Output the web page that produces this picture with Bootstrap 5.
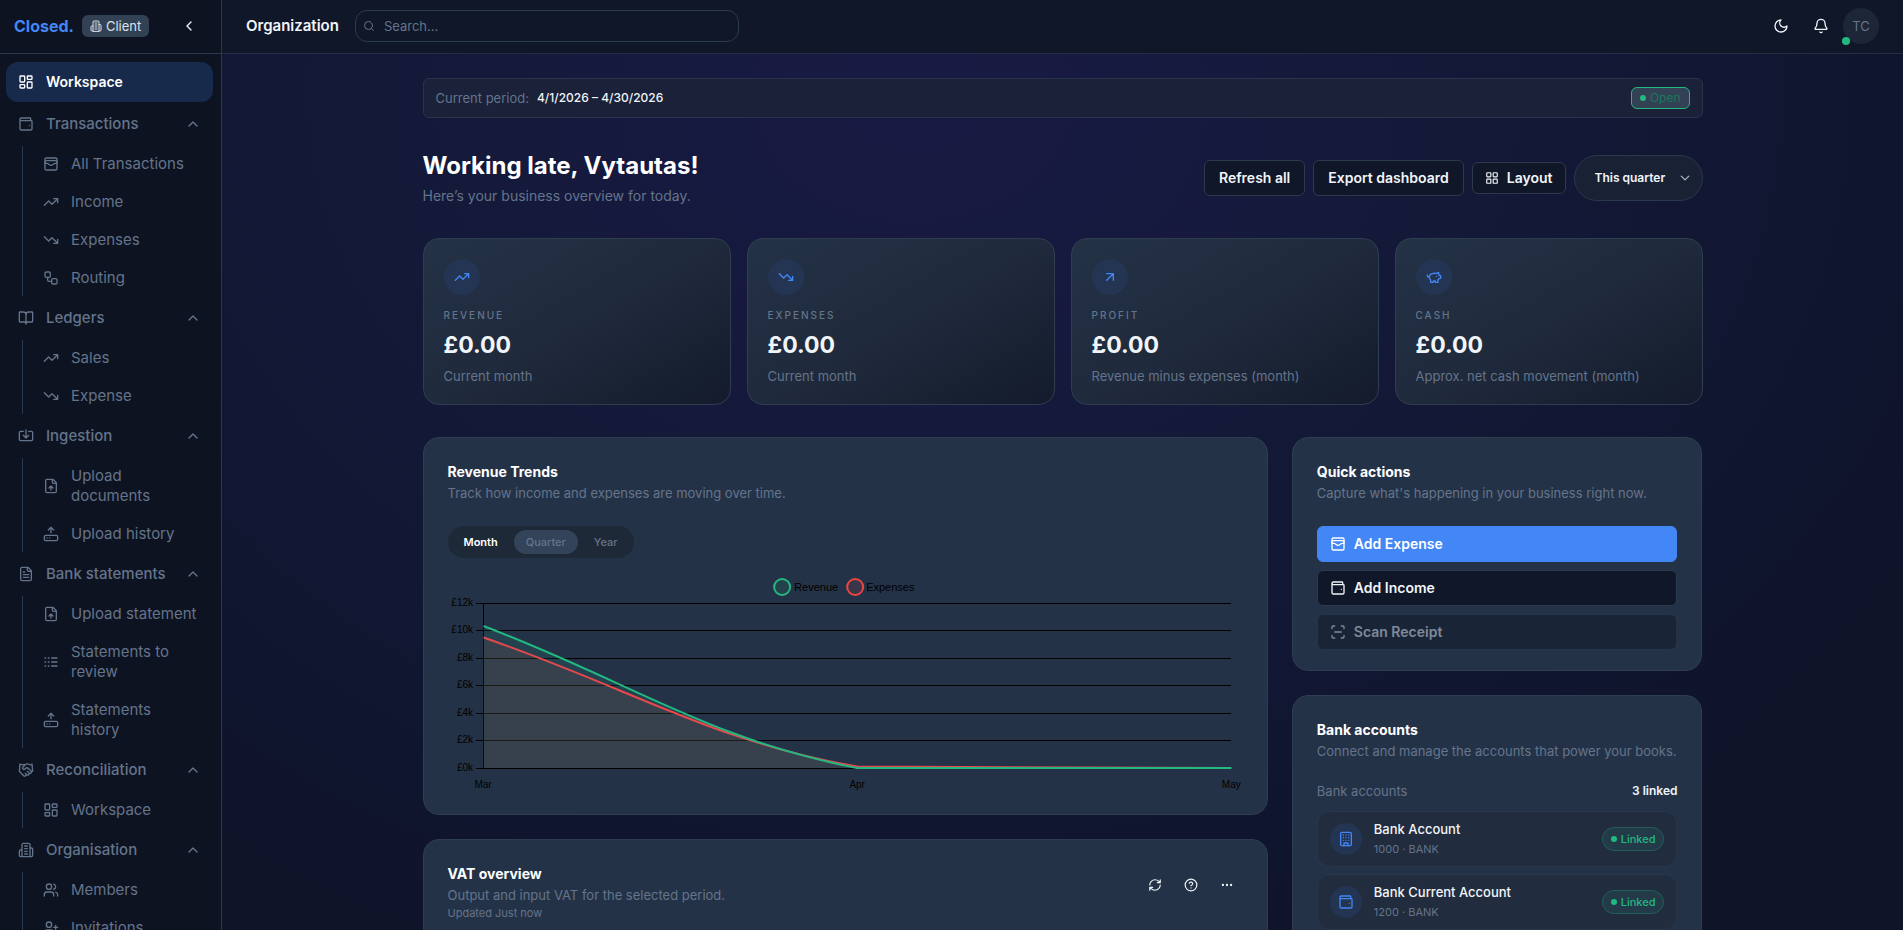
<!DOCTYPE html>
<html lang="en" data-bs-theme="dark">
<head>
<meta charset="utf-8">
<meta name="viewport" content="width=device-width, initial-scale=1">
<title>Closed. – Workspace</title>
<link rel="stylesheet" href="https://cdn.jsdelivr.net/npm/bootstrap@5.3.0/dist/css/bootstrap.min.css">
<style>
:root{--muted:#64748b;--line:#2f3d50;--panel:#243247;--ink:#f1f5f9;--blue:#4287f5;--green:#22b881}
body{font-family:Inter,"Liberation Sans",sans-serif;font-size:14px;line-height:20px;color:var(--ink);
  background:radial-gradient(ellipse 64% 105% at 48% 10%,#191a44 0%,#141939 42%,#10152f 80%,#0f1428 100%)}
a{text-decoration:none;color:inherit}
.ico{width:16px;height:16px;flex:none;fill:none;stroke:currentColor;stroke-width:2;stroke-linecap:round;stroke-linejoin:round}
.ico-sm{width:12px;height:12px}
.ico-md{width:14px;height:14px}
.muted{color:var(--muted)}
.fs-13{font-size:13px}.fs-12{font-size:12px}.fs-11{font-size:11px}
/* sidebar */
.side{width:222px;background:#0d1321;border-right:1px solid #2b3950}
.bar{height:54px;padding:0 14px 2px;border-bottom:1px solid #2b3950}
.top-bar{background:#101729;border-color:#252e47;padding:0 24px 2px}
.brand{font-size:16px;font-weight:700;color:var(--blue)}
.client{height:22px;padding:0 8px;border-radius:6px;background:#334155;color:#dbe2ea;font-size:13px}
.side-nav{padding:8px 8px 8px 6px;gap:2px}
.nav-row{height:40px;padding:0 12px;border:0;border-radius:12px;background:none;color:var(--muted);font-size:15px;font-weight:500;gap:12px;width:100%;text-align:left}
.nav-row.on{background:#172a4c;color:#fff;font-size:14px;font-weight:600}
.sub-list{margin-left:16px;border-left:1px solid #2b3950;gap:2px}
.sub-list a{display:flex;align-items:center;gap:12px;padding:8px 0 8px 20px;color:var(--muted);font-size:15px}
/* header */
.org-name{font-size:15px}
.find{position:relative;width:384px}
.find input{height:32px;border:1px solid #2b3b4e;border-radius:12px;background:#101728;font-size:13px;padding:0 12px 0 28px;color:var(--ink)}
.find input::placeholder{color:var(--muted);opacity:1}
.find .ico{position:absolute;left:8px;top:10px;color:var(--muted)}
.icon-btn{width:36px;height:36px;border:0;background:none;color:var(--ink);display:grid;place-items:center;padding:0}
.avatar{position:relative;width:36px;height:36px;border-radius:50%;background:#1d2637;color:var(--muted);font-size:13px}
.avatar::after{content:"";position:absolute;left:-1px;bottom:-1px;width:8px;height:8px;border-radius:50%;background:var(--green)}
/* content */
.page-area{min-height:0;overflow:auto;scrollbar-width:none}
.wrap{max-width:1280px;margin:0 auto;padding:24px 0}
.period{height:40px;padding:0 12px;border:1px solid #29344a;border-radius:6px;background:#1a2138}
.dot{width:6px;height:6px;border-radius:50%;background:var(--green);flex:none}
.open-tag{height:22px;padding:0 8px;border:1px solid var(--green);border-radius:6px;background:#334155;color:#177a5b;font-size:12px;gap:4px}
h1{font-size:24px;line-height:32px;font-weight:700;margin:0}
.tool{height:36px;padding:0 14px;border:1px solid #2b3a4d;border-radius:6px;background:#101728;color:var(--ink);font-size:14px;font-weight:600;gap:8px;display:inline-flex;align-items:center}
.tool-s{height:32px;padding:0 12px}
.range{width:129px;height:46px;border:1px solid #29374b;border-radius:23px;background-color:#192235;color:var(--ink);font-size:12px;font-weight:600;padding:0 28px 0 20px;background-position:right 12px center;background-size:10px;
 --bs-form-select-bg-img:url("data:image/svg+xml,%3csvg xmlns='http://www.w3.org/2000/svg' viewBox='0 0 10 10'%3e%3cpath d='M1 3l4 4 4-4' fill='none' stroke='%23f1f5f9' stroke-width='2'/%3e%3c/svg%3e")}
.kpi{height:167px;padding:20px;border:1px solid var(--line);border-radius:16px;background:linear-gradient(150deg,#243246 0%,#1f2a3c 50%,#131b2c 100%)}
.disc{width:36px;height:36px;border-radius:50%;background:#243553;color:var(--blue);display:grid;place-items:center;flex:none}
.kpi-name{font-size:10px;line-height:16px;font-weight:500;letter-spacing:2px;color:var(--muted);margin-top:12px}
.kpi-sum{font-size:23px;line-height:32px;font-weight:700;margin-top:6px}
.kpi-note{line-height:20px;margin-top:5px}
.panel{border:1px solid var(--line);border-radius:16px;background:var(--panel);padding:23px 24px 20px}
.panel h2{font-size:14px;line-height:22px;font-weight:700;margin:0}
.panel-note{font-size:13px;line-height:20px;margin:0;white-space:nowrap}
.updated{line-height:16px}
.seg{background:#1e2938;border-radius:16px;padding:4px;margin-top:23px}
.seg button{border:0;background:none;height:24px;border-radius:12px;padding:0 12px;font-size:11px;font-weight:500;color:var(--muted)}
.seg button.lit{color:#fff;font-weight:600}
.seg button.cur{background:#334359}
.vat-tools{margin-right:-2px}
.quick-list{margin-top:23px}
.quick .tool{width:100%;padding:0 12px}
.quick .go{background:var(--blue);border-color:var(--blue);color:#fff}
.quick .tool:disabled{background:#1a2437;border-color:#273448;color:#7f8a99}
.acct-head{margin:20px 0 10px}
.acct{height:56px;padding:0 12px;border:1px solid #2a374a;border-radius:12px;background:#212c3e}
.acct+.acct{margin-top:7px}
.acct .disc{width:32px;height:32px}
.linked{height:24px;padding:0 8px;border:1px solid #215f58;border-radius:12px;background:#233b49;color:var(--green);font-size:11px;font-weight:500;gap:4px}
.chart text{font-family:"Liberation Sans",sans-serif;font-size:10px;fill:#000}
.chart .key{font-size:11px}
</style>
</head>
<body>
<svg class="d-none" aria-hidden="true">
<symbol id="dash" viewBox="0 0 24 24"><rect x="3" y="3" width="7" height="9" rx="1"/><rect x="14" y="3" width="7" height="5" rx="1"/><rect x="14" y="12" width="7" height="9" rx="1"/><rect x="3" y="16" width="7" height="5" rx="1"/></symbol>
<symbol id="wallet" viewBox="0 0 24 24"><path d="M19 7V4a1 1 0 0 0-1-1H5a2 2 0 0 0 0 4h15a1 1 0 0 1 1 1v11a2 2 0 0 1-2 2H5a2 2 0 0 1-2-2V5M17 14h.01"/></symbol>
<symbol id="cards" viewBox="0 0 24 24"><rect x="3" y="3" width="18" height="18" rx="2"/><path d="M3 9a2 2 0 0 1 2-2h14a2 2 0 0 1 2 2M3 11h3c.8 0 1.6.3 2.1.9l1.1.9c1.6 1.6 4.1 1.6 5.7 0l1.1-.9c.5-.5 1.3-.9 2.1-.9H21"/></symbol>
<symbol id="up" viewBox="0 0 24 24"><path d="M22 7l-8.500 8.500-5-5L2 17M16 7h6v6"/></symbol>
<symbol id="down" viewBox="0 0 24 24"><path d="M22 17l-8.500-8.500-5 5L2 7M16 17h6v-6"/></symbol>
<symbol id="flow" viewBox="0 0 24 24"><rect x="3" y="3" width="8" height="8" rx="2"/><path d="M7 11v4a2 2 0 0 0 2 2h4"/><rect x="13" y="13" width="8" height="8" rx="2"/></symbol>
<symbol id="book" viewBox="0 0 24 24"><path d="M12 7v14M3 18a1 1 0 0 1-1-1V4a1 1 0 0 1 1-1h5a4 4 0 0 1 4 4 4 4 0 0 1 4-4h5a1 1 0 0 1 1 1v13a1 1 0 0 1-1 1h-6a3 3 0 0 0-3 3 3 3 0 0 0-3-3z"/></symbol>
<symbol id="import" viewBox="0 0 24 24"><path d="M12 3v12M8 11l4 4 4-4M8 5H4a2 2 0 0 0-2 2v10a2 2 0 0 0 2 2h16a2 2 0 0 0 2-2V7a2 2 0 0 0-2-2h-4"/></symbol>
<symbol id="fileup" viewBox="0 0 24 24"><path d="M15 2H6a2 2 0 0 0-2 2v16a2 2 0 0 0 2 2h12a2 2 0 0 0 2-2V7zM14 2v4a2 2 0 0 0 2 2h4M12 12v6M15 15l-3-3-3 3"/></symbol>
<symbol id="drive" viewBox="0 0 24 24"><path d="M16 6l-4-4-4 4M12 2v8M6 18h.01M10 18h.01"/><rect x="2" y="14" width="20" height="8" rx="2"/></symbol>
<symbol id="file" viewBox="0 0 24 24"><path d="M15 2H6a2 2 0 0 0-2 2v16a2 2 0 0 0 2 2h12a2 2 0 0 0 2-2V7zM14 2v4a2 2 0 0 0 2 2h4M10 9H8M16 13H8M16 17H8"/></symbol>
<symbol id="logs" viewBox="0 0 24 24"><path d="M13 12h8M13 18h8M13 6h8M3 12h1M3 18h1M3 6h1M8 12h1M8 18h1M8 6h1"/></symbol>
<symbol id="shake" viewBox="0 0 24 24"><path d="M11 17l2 2a1 1 0 1 0 3-3M14 14l2.500 2.500a1 1 0 1 0 3-3l-3.880-3.880a3 3 0 0 0-4.240 0l-.88.88a1 1 0 1 1-3-3l2.810-2.810a5.790 5.790 0 0 1 7.060-.87l.47.28a2 2 0 0 0 1.420.25L21 4M21 3l1 11h-2M3 3L2 14l6.500 6.500a1 1 0 1 0 3-3M3 4h8"/></symbol>
<symbol id="org" viewBox="0 0 24 24"><path d="M6 22V4a2 2 0 0 1 2-2h8a2 2 0 0 1 2 2v18zM6 12H4a2 2 0 0 0-2 2v6a2 2 0 0 0 2 2h2M18 9h2a2 2 0 0 1 2 2v9a2 2 0 0 1-2 2h-2M10 6h4M10 10h4M10 14h4M10 18h4"/></symbol>
<symbol id="users" viewBox="0 0 24 24"><path d="M16 21v-2a4 4 0 0 0-4-4H6a4 4 0 0 0-4 4v2M22 21v-2a4 4 0 0 0-3-3.870M16 3.130a4 4 0 0 1 0 7.750"/><circle cx="9" cy="7" r="4"/></symbol>
<symbol id="useradd" viewBox="0 0 24 24"><path d="M16 21v-2a4 4 0 0 0-4-4H6a4 4 0 0 0-4 4v2M19 8v6M22 11h-6"/><circle cx="9" cy="7" r="4"/></symbol>
<symbol id="chev" viewBox="0 0 24 24"><path d="M18 15l-6-6-6 6"/></symbol>
<symbol id="left" viewBox="0 0 24 24"><path d="M15 18l-6-6 6-6"/></symbol>
<symbol id="search" viewBox="0 0 24 24"><circle cx="11" cy="11" r="8"/><path d="M21 21l-4.300-4.300"/></symbol>
<symbol id="moon" viewBox="0 0 24 24"><path d="M12 3a6 6 0 0 0 9 9 9 9 0 1 1-9-9z"/></symbol>
<symbol id="bell" viewBox="0 0 24 24"><path d="M10.270 21a2 2 0 0 0 3.460 0M3.260 15.330A1 1 0 0 0 4 17h16a1 1 0 0 0 .74-1.670C19.410 13.960 18 12.500 18 8A6 6 0 0 0 6 8c0 4.500-1.410 5.960-2.740 7.330z"/></symbol>
<symbol id="grid" viewBox="0 0 24 24"><rect x="3" y="3" width="7" height="7" rx="1"/><rect x="14" y="3" width="7" height="7" rx="1"/><rect x="14" y="14" width="7" height="7" rx="1"/><rect x="3" y="14" width="7" height="7" rx="1"/></symbol>
<symbol id="ne" viewBox="0 0 24 24"><path d="M7 7h10v10M7 17L17 7"/></symbol>
<symbol id="pig" viewBox="0 0 24 24"><path d="M19 5c-1.500 0-2.800 1.400-3 2-3.500-1.500-11-.3-11 5 0 1.800 0 3 2 4.500V20h4v-2h3v2h4v-4c1-.5 1.700-1 2-2h2v-4h-2c0-1-.5-1.500-1-2zM2 9v1c0 1.100.9 2 2 2h1M16 11h.01"/></symbol>
<symbol id="scan" viewBox="0 0 24 24"><path d="M3 7V5a2 2 0 0 1 2-2h2M17 3h2a2 2 0 0 1 2 2v2M21 17v2a2 2 0 0 1-2 2h-2M7 21H5a2 2 0 0 1-2-2v-2M7 12h10"/></symbol>
<symbol id="bldg" viewBox="0 0 24 24"><rect x="4" y="2" width="16" height="20" rx="2"/><path d="M9 22v-4h6v4M8 6h.01M16 6h.01M12 6h.01M12 10h.01M12 14h.01M16 10h.01M16 14h.01M8 10h.01M8 14h.01"/></symbol>
<symbol id="sync" viewBox="0 0 24 24"><path d="M3 12a9 9 0 0 1 9-9 9.750 9.750 0 0 1 6.740 2.740L21 8M21 3v5h-5M21 12a9 9 0 0 1-9 9 9.750 9.750 0 0 1-6.740-2.740L3 16M8 16H3v5"/></symbol>
<symbol id="help" viewBox="0 0 24 24"><circle cx="12" cy="12" r="10"/><path d="M9.090 9a3 3 0 0 1 5.830 1c0 2-3 3-3 3M12 17h.01"/></symbol>
<symbol id="more" viewBox="0 0 24 24"><path d="M5 12h.01M12 12h.01M19 12h.01" stroke-width="4"/></symbol>
</svg>

<div class="d-flex vh-100 overflow-hidden">
  <aside class="side d-flex flex-column flex-shrink-0">
    <div class="bar d-flex align-items-center flex-shrink-0">
      <a href="#" class="brand me-2">Closed.</a>
      <span class="client d-inline-flex align-items-center gap-1"><svg class="ico ico-sm"><use href="#org"/></svg>Client</span>
      <button class="icon-btn ms-auto" aria-label="Collapse sidebar"><svg class="ico"><use href="#left"/></svg></button>
    </div>
    <nav class="side-nav d-flex flex-column" aria-label="Main">
      <a href="#" class="nav-row on d-flex align-items-center flex-shrink-0"><svg class="ico"><use href="#dash"/></svg>Workspace</a>
      <button class="nav-row d-flex align-items-center flex-shrink-0"><svg class="ico"><use href="#wallet"/></svg>Transactions<svg class="ico ms-auto"><use href="#chev"/></svg></button>
      <div class="sub-list d-flex flex-column">
        <a href="#"><svg class="ico"><use href="#cards"/></svg>All Transactions</a>
        <a href="#"><svg class="ico"><use href="#up"/></svg>Income</a>
        <a href="#"><svg class="ico"><use href="#down"/></svg>Expenses</a>
        <a href="#"><svg class="ico"><use href="#flow"/></svg>Routing</a>
      </div>
      <button class="nav-row d-flex align-items-center flex-shrink-0"><svg class="ico"><use href="#book"/></svg>Ledgers<svg class="ico ms-auto"><use href="#chev"/></svg></button>
      <div class="sub-list d-flex flex-column">
        <a href="#"><svg class="ico"><use href="#up"/></svg>Sales</a>
        <a href="#"><svg class="ico"><use href="#down"/></svg>Expense</a>
      </div>
      <button class="nav-row d-flex align-items-center flex-shrink-0"><svg class="ico"><use href="#import"/></svg>Ingestion<svg class="ico ms-auto"><use href="#chev"/></svg></button>
      <div class="sub-list d-flex flex-column">
        <a href="#"><svg class="ico"><use href="#fileup"/></svg><span>Upload<br>documents</span></a>
        <a href="#"><svg class="ico"><use href="#drive"/></svg>Upload history</a>
      </div>
      <button class="nav-row d-flex align-items-center flex-shrink-0"><svg class="ico"><use href="#file"/></svg>Bank statements<svg class="ico ms-auto"><use href="#chev"/></svg></button>
      <div class="sub-list d-flex flex-column">
        <a href="#"><svg class="ico"><use href="#fileup"/></svg>Upload statement</a>
        <a href="#"><svg class="ico"><use href="#logs"/></svg><span>Statements to<br>review</span></a>
        <a href="#"><svg class="ico"><use href="#drive"/></svg><span>Statements<br>history</span></a>
      </div>
      <button class="nav-row d-flex align-items-center flex-shrink-0"><svg class="ico"><use href="#shake"/></svg>Reconciliation<svg class="ico ms-auto"><use href="#chev"/></svg></button>
      <div class="sub-list d-flex flex-column">
        <a href="#"><svg class="ico"><use href="#dash"/></svg>Workspace</a>
      </div>
      <button class="nav-row d-flex align-items-center flex-shrink-0"><svg class="ico"><use href="#org"/></svg>Organisation<svg class="ico ms-auto"><use href="#chev"/></svg></button>
      <div class="sub-list d-flex flex-column">
        <a href="#"><svg class="ico"><use href="#users"/></svg>Members</a>
        <a href="#"><svg class="ico"><use href="#useradd"/></svg>Invitations</a>
      </div>
    </nav>
  </aside>

  <div class="d-flex flex-column flex-grow-1">
    <header class="bar top-bar d-flex align-items-center flex-shrink-0">
      <span class="org-name fw-semibold me-3">Organization</span>
      <div class="find"><svg class="ico ico-sm"><use href="#search"/></svg><input type="search" class="form-control" placeholder="Search…" aria-label="Search"></div>
      <div class="d-flex align-items-center gap-1 ms-auto">
        <button class="icon-btn" aria-label="Dark mode"><svg class="ico"><use href="#moon"/></svg></button>
        <button class="icon-btn" aria-label="Notifications"><svg class="ico"><use href="#bell"/></svg></button>
        <button class="avatar border-0 p-0">TC</button>
      </div>
    </header>
    <main class="page-area flex-grow-1">
      <div class="wrap">
        <div class="period d-flex align-items-center fs-12">
          <span class="muted me-2 fs-13">Current period:</span><span class="fw-medium">4/1/2026 – 4/30/2026</span>
          <span class="open-tag d-inline-flex align-items-center ms-auto"><i class="dot"></i>Open</span>
        </div>
        <div class="d-flex align-items-center justify-content-between my-4 py-2">
          <div>
            <h1>Working late, Vytautas!</h1>
            <div class="muted mt-1">Here’s your business overview for today.</div>
          </div>
          <div class="d-flex align-items-center gap-2">
            <button class="tool">Refresh all</button>
            <button class="tool">Export dashboard</button>
            <button class="tool tool-s"><svg class="ico ico-md"><use href="#grid"/></svg>Layout</button>
            <select class="form-select range" aria-label="Period"><option>This quarter</option><option>This month</option></select>
          </div>
        </div>
        <div class="row g-3">
          <div class="col-3"><section class="kpi"><div class="disc"><svg class="ico"><use href="#up"/></svg></div><div class="kpi-name">REVENUE</div><div class="kpi-sum">£0.00</div><div class="kpi-note muted fs-13">Current month</div></section></div>
          <div class="col-3"><section class="kpi"><div class="disc"><svg class="ico"><use href="#down"/></svg></div><div class="kpi-name">EXPENSES</div><div class="kpi-sum">£0.00</div><div class="kpi-note muted fs-13">Current month</div></section></div>
          <div class="col-3"><section class="kpi"><div class="disc"><svg class="ico"><use href="#ne"/></svg></div><div class="kpi-name">PROFIT</div><div class="kpi-sum">£0.00</div><div class="kpi-note muted fs-13">Revenue minus expenses (month)</div></section></div>
          <div class="col-3"><section class="kpi"><div class="disc"><svg class="ico"><use href="#pig"/></svg></div><div class="kpi-name">CASH</div><div class="kpi-sum">£0.00</div><div class="kpi-note muted fs-13">Approx. net cash movement (month)</div></section></div>
        </div>
        <div class="row gx-4 pt-2 mt-4">
          <div class="col-8 d-flex flex-column gap-4">
            <section class="panel">
              <h2>Revenue Trends</h2>
              <p class="panel-note muted">Track how income and expenses are moving over time.</p>
              <div class="seg d-inline-flex gap-1"><button class="lit">Month</button><button class="cur">Quarter</button><button>Year</button></div>
              <svg class="chart d-block w-100 mt-3" viewBox="0 0 795 220" role="img" aria-label="Revenue and expenses, March to May">
                <g stroke="#000" shape-rendering="crispEdges"><path d="M28 29.500H783M28 56.500H783M28 84.500H783M28 111.500H783M28 139.500H783M28 166.500H783M28 194.500H783M35.500 29V194"/></g>
                <path d="M35.500 52C185 109 260 165 409 194H783V194H35.500Z" fill="#22b881" fill-opacity=".12"/>
                <path d="M35.500 63.500C185 115 260 166 409 192.500L783 194H35.500Z" fill="#ef4444" fill-opacity=".1"/>
                <path d="M35.500 63.500C185 115 260 166 409 192.500L783 194" fill="none" stroke="#e5484d" stroke-width="2"/>
                <path d="M35.500 52C185 109 260 165 409 194H783" fill="none" stroke="#22b881" stroke-width="2"/>
                <g stroke-width="2"><circle cx="334" cy="13" r="8" fill="#24424c" stroke="#22b881"/><circle cx="407" cy="13" r="8" fill="#383648" stroke="#ef4444"/></g>
                <text class="key" x="346" y="17">Revenue</text><text class="key" x="418" y="17">Expenses</text>
                <g text-anchor="end"><text x="25" y="32">£12k</text><text x="25" y="59">£10k</text><text x="25" y="87">£8k</text><text x="25" y="114">£6k</text><text x="25" y="142">£4k</text><text x="25" y="169">£2k</text><text x="25" y="197">£0k</text></g>
                <g text-anchor="middle"><text x="35" y="214">Mar</text><text x="409" y="214">Apr</text><text x="783" y="214">May</text></g>
              </svg>
            </section>
            <section class="panel d-flex justify-content-between pb-5">
              <div>
                <h2>VAT overview</h2>
                <p class="panel-note muted">Output and input VAT for the selected period.</p>
                <div class="updated muted fs-11">Updated Just now</div>
              </div>
              <div class="vat-tools d-flex pt-1">
                <button class="icon-btn" aria-label="Refresh"><svg class="ico ico-md"><use href="#sync"/></svg></button>
                <button class="icon-btn" aria-label="Help"><svg class="ico ico-md"><use href="#help"/></svg></button>
                <button class="icon-btn" aria-label="More"><svg class="ico ico-md"><use href="#more"/></svg></button>
              </div>
            </section>
          </div>
          <div class="col-4 d-flex flex-column gap-4">
            <section class="panel quick">
              <h2>Quick actions</h2>
              <p class="panel-note muted">Capture what's happening in your business right now.</p>
              <div class="quick-list d-flex flex-column gap-2">
                <button class="tool go"><svg class="ico"><use href="#cards"/></svg>Add Expense</button>
                <button class="tool"><svg class="ico"><use href="#wallet"/></svg>Add Income</button>
                <button class="tool" disabled><svg class="ico"><use href="#scan"/></svg>Scan Receipt</button>
              </div>
            </section>
            <section class="panel">
              <h2>Bank accounts</h2>
              <p class="panel-note muted">Connect and manage the accounts that power your books.</p>
              <div class="acct-head d-flex justify-content-between"><span class="muted fs-13">Bank accounts</span><span class="fw-semibold fs-12">3 linked</span></div>
              <div class="acct d-flex align-items-center gap-2">
                <div class="disc"><svg class="ico"><use href="#bldg"/></svg></div>
                <div class="flex-grow-1 ms-1"><div class="fw-medium fs-13">Bank Account</div><div class="muted fs-11">1000 · BANK</div></div>
                <span class="linked d-inline-flex align-items-center"><i class="dot"></i>Linked</span>
              </div>
              <div class="acct d-flex align-items-center gap-2">
                <div class="disc"><svg class="ico"><use href="#wallet"/></svg></div>
                <div class="flex-grow-1 ms-1"><div class="fw-medium fs-13">Bank Current Account</div><div class="muted fs-11">1200 · BANK</div></div>
                <span class="linked d-inline-flex align-items-center"><i class="dot"></i>Linked</span>
              </div>
            </section>
          </div>
        </div>
      </div>
    </main>
  </div>
</div>
<script src="https://cdn.jsdelivr.net/npm/bootstrap@5.3.0/dist/js/bootstrap.bundle.min.js"></script>
</body>
</html>
